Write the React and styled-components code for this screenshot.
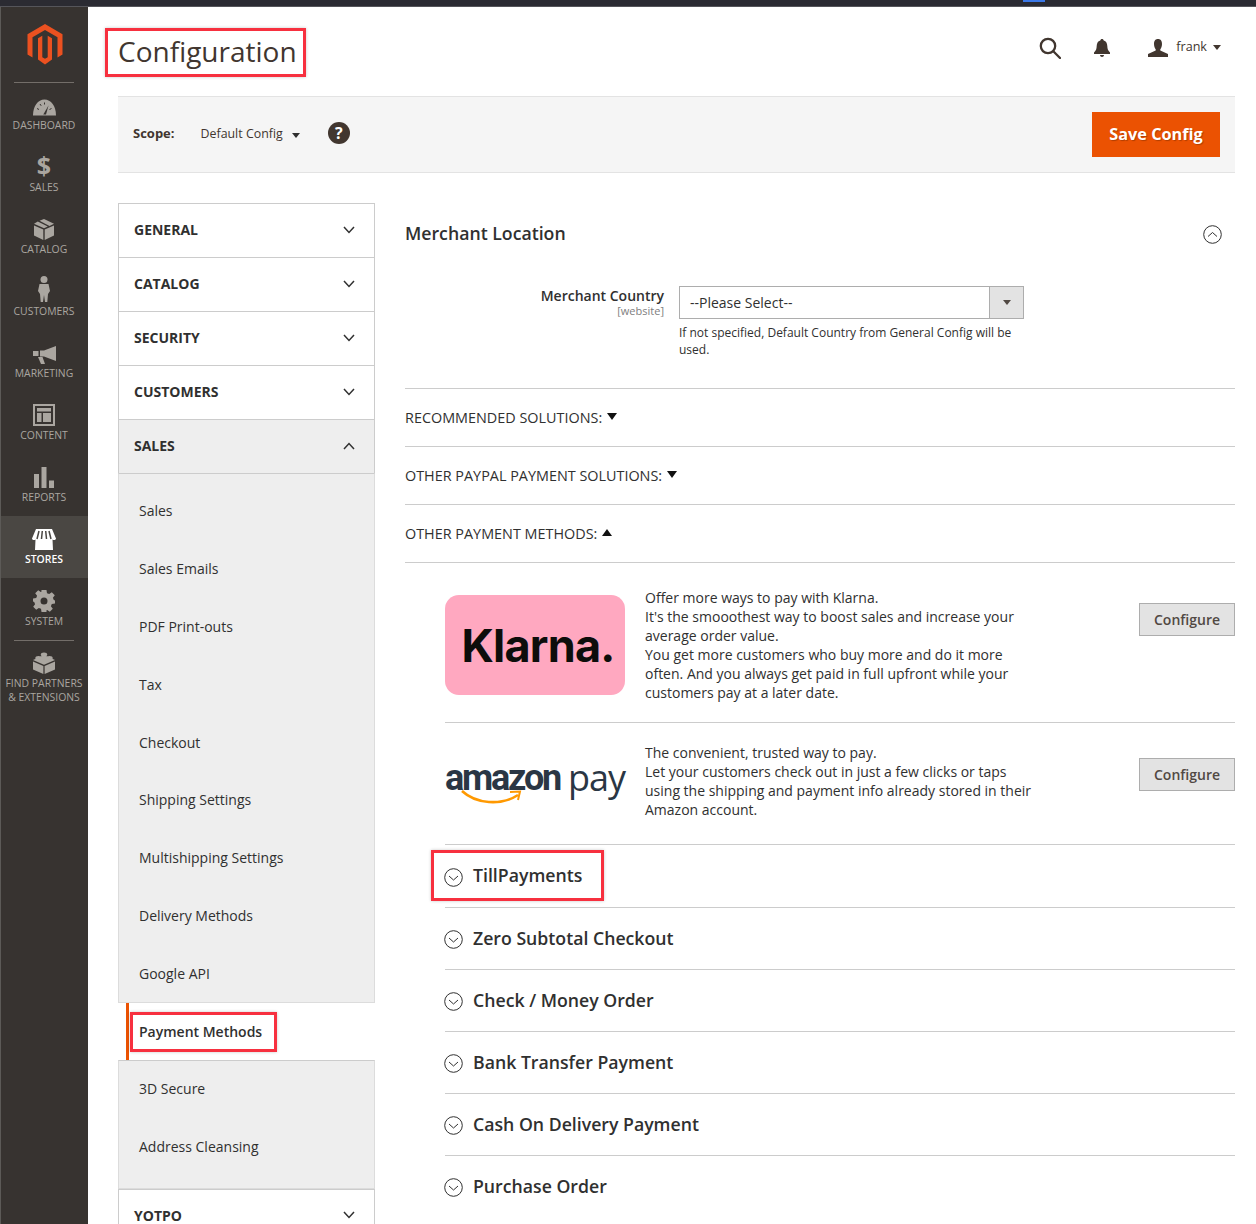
import React from "react";
import styled, { createGlobalStyle } from "styled-components";

const GlobalStyle = createGlobalStyle`
  html, body {
    margin: 0;
    padding: 0;
    background: #fff;
  }
  body {
    font-family: "Open Sans", "Liberation Sans", sans-serif;
    font-size: 14px;
    color: #303030;
  }
  * {
    box-sizing: border-box;
  }
`;

const Page = styled.div`
  position: relative;
  width: 1256px;
  height: 1224px;
  overflow: hidden;
`;

const TopStrip = styled.div`
  position: relative;
  height: 7px;
  background: #2b2b32;
  border-bottom: 1px solid #55555a;
`;

const BlueTab = styled.span`
  position: absolute;
  left: 1023px;
  top: 0;
  width: 22px;
  height: 2px;
  background: #3b78e7;
`;

const Body = styled.div`
  display: flex;
  height: 1217px;
`;

const Sidebar = styled.nav`
  flex: 0 0 88px;
  background: #373330;
  border-left: 1px solid #5c5a57;
`;

const LogoSlot = styled.div`
  height: 75px;
  display: flex;
  justify-content: center;
  padding-top: 17px;
`;

const MenuItem = styled.div`
  height: 62px;
  display: flex;
  flex-direction: column;
  align-items: center;
  padding: 8px 1px 0 0;
  position: relative;
  background: ${(p) => (p.$active ? "#4a4743" : "transparent")};
  color: ${(p) => (p.$active ? "#fff" : "#aaa6a0")};

  &::before {
    content: ${(p) => (p.$rule ? '""' : "none")};
    position: absolute;
    top: 0;
    left: 13px;
    width: 60px;
    height: 1px;
    background: #736e69;
  }
`;

const MenuIcon = styled.div`
  flex: 0 0 26px;
  display: flex;
  align-items: flex-end;
  justify-content: center;
`;

const DollarGlyph = styled.span`
  font-size: 25px;
  line-height: 25px;
  font-weight: 700;
  font-family: "Open Sans", sans-serif;
`;

const MenuLabel = styled.div`
  flex: none;
  margin-top: 2px;
  font-size: 10.4px;
  line-height: 14px;
  text-align: center;
  white-space: nowrap;
  text-transform: uppercase;
  font-weight: ${(p) => (p.$active ? 600 : 400)};
`;

const Main = styled.main`
  flex: 1;
  min-width: 0;
  padding: 0 21px 0 30px;
`;

const Header = styled.header`
  height: 89px;
  display: flex;
  align-items: center;
  justify-content: space-between;
  padding-bottom: 1px;
`;

const Marked = styled.span`
  position: relative;
  display: inline-block;

  &::after {
    content: "";
    position: absolute;
    inset: ${(p) => p.$inset};
    border: 3px solid #f7303f;
    box-shadow: 0 0 3px rgba(0, 0, 0, 0.22);
    pointer-events: none;
  }
`;

const PageTitle = styled.h1`
  margin: 0;
  font-size: 28px;
  line-height: 38px;
  font-weight: 400;
  color: #41362f;
`;

const HeaderTools = styled.div`
  display: flex;
  align-items: center;
  padding-right: 14px;
  margin-bottom: 7px;
  color: #41362f;
`;

const ToolIcon = styled.span`
  display: flex;
  margin-right: ${(p) => p.$gap}px;
`;

const UserName = styled.span`
  font-size: 12.6px;
  margin: 0 6px 3px 8px;
  color: #41362f;
`;

const Caret = styled.span`
  display: inline-block;
  width: 0;
  height: 0;
  margin-left: ${(p) => p.$gap || 0}px;
  border-left: ${(p) => p.$size || 4}px solid transparent;
  border-right: ${(p) => p.$size || 4}px solid transparent;
  ${(p) => (p.$up ? "border-bottom" : "border-top")}: ${(p) => (p.$size ? p.$size + 2 : 5)}px solid ${(p) => p.$color || "#41362f"};
`;

const ScopeBar = styled.div`
  height: 77px;
  display: flex;
  align-items: center;
  justify-content: space-between;
  padding: 0 15px;
  background: #f5f5f5;
  border-top: 1px solid #e3e3e3;
  border-bottom: 1px solid #e3e3e3;
`;

const ScopeLeft = styled.div`
  display: flex;
  align-items: center;
  padding-bottom: 4px;
`;

const ScopeLabel = styled.span`
  font-size: 13px;
  font-weight: 700;
  color: #41362f;
  margin-right: 26px;
`;

const ScopeValue = styled.span`
  font-size: 12.4px;
  padding-top: 2px;
  color: #41362f;
`;

const ScopeCaret = styled(Caret)`
  margin-top: 5px;
`;

const HelpBadge = styled.span`
  width: 22px;
  height: 22px;
  margin-left: 28px;
  border-radius: 50%;
  background: #41362f;
  color: #fff;
  font-size: 16px;
  font-weight: 700;
  line-height: 22px;
  text-align: center;
`;

const SaveButton = styled.button`
  width: 128px;
  height: 45px;
  padding-bottom: 2px;
  border: 0;
  background: #eb5202;
  color: #fff;
  font-family: inherit;
  font-size: 16.3px;
  font-weight: 700;
  text-shadow: 1px 1px 1px rgba(0, 0, 0, 0.25);
`;

const Columns = styled.div`
  display: flex;
  gap: 30px;
  margin-top: 30px;
`;

const ConfigNav = styled.aside`
  flex: 0 0 257px;
`;

const NavHead = styled.div`
  height: 54px;
  display: flex;
  align-items: center;
  justify-content: space-between;
  padding: 0 19px 2px 15px;
  border: 1px solid #cccccc;
  border-bottom: 0;
  background: ${(p) => (p.$open ? "#eeeeee" : "#fff")};
  font-size: 14px;
  font-weight: 700;
  color: #303030;
  text-transform: uppercase;
`;

const NavPanel = styled.div`
  background: #eeeeee;
  border: 1px solid #dcdcdc;
  border-top: 1px solid #cccccc;
  padding: ${(p) => p.$pad};
`;

const NavLink = styled.div`
  height: 57.8px;
  display: flex;
  align-items: center;
  padding: 0 0 ${(p) => p.$lift || 0}px 20px;
  font-size: 14px;
  color: #303030;
`;

const ActiveLink = styled.div`
  height: 57px;
  margin-left: 8px;
  display: flex;
  align-items: center;
  padding-left: 10px;
  border-left: 3px solid #eb5202;
  font-size: 14px;
  font-weight: 600;
  color: #303030;
`;

const Content = styled.section`
  flex: 1;
  min-width: 0;
`;

const SectionHead = styled.div`
  height: 60px;
  display: flex;
  align-items: center;
  justify-content: space-between;
  padding-right: 13px;
`;

const SectionTitle = styled.h2`
  margin: 0;
  font-size: 17.7px;
  font-weight: 600;
  color: #303030;
`;

const FormRow = styled.div`
  display: flex;
  gap: 15px;
  margin-top: 23px;
  padding-bottom: 30px;
`;

const FieldLabel = styled.div`
  flex: 0 0 259px;
  text-align: right;
  font-size: 14px;
  font-weight: 600;
  line-height: 19px;
`;

const ScopeHint = styled.div`
  font-size: 11px;
  font-weight: 400;
  line-height: 12px;
  color: #808080;
`;

const FieldControl = styled.div`
  flex: 0 0 345px;
`;

const SelectBox = styled.div`
  height: 33px;
  display: flex;
  align-items: stretch;
  border: 1px solid #adadad;
  font-size: 14px;
`;

const SelectValue = styled.div`
  flex: 1;
  display: flex;
  align-items: center;
  padding-left: 10px;
`;

const SelectArrow = styled.div`
  flex: 0 0 34px;
  display: flex;
  align-items: center;
  justify-content: center;
  background: #e3e3e3;
  border-left: 1px solid #adadad;
`;

const FieldNote = styled.p`
  margin: 5px 0 0;
  font-size: 12px;
  line-height: 17px;
`;

const GroupRow = styled.div`
  height: 58px;
  display: flex;
  align-items: center;
  gap: 5px;
  border-top: 1px solid #cccccc;
  font-size: 14.4px;
  text-transform: uppercase;
`;

const GroupCaret = styled(Caret)`
  margin-bottom: 2px;
`;

const Methods = styled.div`
  margin-left: 40px;
`;

const MethodsRule = styled.div`
  border-top: 1px solid #cccccc;
  margin-left: -40px;
`;

const Solution = styled.div`
  display: flex;
  align-items: flex-start;
  padding: ${(p) => p.$top}px 0 ${(p) => p.$bottom}px;
  border-top: ${(p) => (p.$first ? "0" : "1px solid #cccccc")};
`;

const SolutionLogo = styled.div`
  flex: 0 0 180px;
  align-self: center;
  margin-right: 20px;
`;

const KlarnaBadge = styled.div`
  height: 100px;
  border-radius: 14px;
  background: #ffa8c0;
  display: flex;
  align-items: center;
  justify-content: center;
  padding-left: 6px;
  color: #0d0d0b;
  font-family: Inter, sans-serif;
  font-size: 45px;
  font-weight: 700;
  letter-spacing: -0.8px;
`;

const AmazonMark = styled.div`
  position: relative;
  height: 42px;
  display: flex;
  align-items: flex-start;
  justify-content: space-between;
  color: #2a3644;
  margin-top: 2px;
`;

const AmazonWord = styled.span`
  font-family: Roboto, sans-serif;
  font-size: 36px;
  line-height: 34px;
  font-weight: 700;
  letter-spacing: -2.2px;
`;

const PayWord = styled.span`
  font-family: "Open Sans", sans-serif;
  font-size: 36px;
  line-height: 34px;
  font-weight: 400;
  letter-spacing: -1px;
`;

const SmileArrow = styled.svg`
  position: absolute;
  left: 16px;
  top: 29px;
`;

const SolutionText = styled.div`
  flex: 0 0 390px;
  font-size: 14px;
  line-height: 19px;
`;

const ConfigureButton = styled.button`
  margin: 15px 0 0 auto;
  width: 96px;
  height: 33px;
  background: #e3e3e3;
  border: 1px solid #adadad;
  color: #514943;
  font-family: inherit;
  font-size: 14px;
  font-weight: 600;
`;

const AccordionRow = styled.div`
  height: ${(p) => (p.$tall ? 63 : 62)}px;
  display: flex;
  align-items: center;
  gap: 10px;
  border-top: 1px solid #cccccc;
`;

const AccordionTitle = styled.h3`
  margin: 0;
  padding-bottom: 2px;
  font-size: 17.7px;
  font-weight: 600;
  color: #303030;
`;

const RingIcon = styled.svg`
  flex: none;
  margin: ${(p) => (p.$up ? "2px 0 0" : "2px 0 0 -1px")};
`;

const Chevron = ({ up }) => (
  <svg width="12" height="8" viewBox="0 0 12 8" fill="none" stroke="#303030" strokeWidth="1.5">
    <path d={up ? "M1 7l5-5.5L11 7" : "M1 1l5 5.5L11 1"} />
  </svg>
);

const CircleChevron = ({ up }) => (
  <RingIcon $up={up} width="19" height="19" viewBox="0 0 19 19" fill="none" stroke="#303030" strokeWidth="1">
    <circle cx="9.5" cy="9.5" r="8.8" />
    <path d={up ? "M5 11.5l4.5-4 4.5 4" : "M5 8l4.5 4 4.5-4"} />
  </RingIcon>
);

const MagentoLogo = () => (
  <svg width="36" height="41" viewBox="0 0 36 41" fill="#eb5120">
    <path d="M18 0L35.5 10.2V30.6L30.5 33.5V13.2L18 6L5.5 13.2V33.5L.5 30.6V10.2Z" />
    <path d="M15.3 11.7V33.2L18 34.8L20.7 33.2V11.7L25 14.2V35.6L18 40.5L11 35.6V14.2Z" />
  </svg>
);

const GaugeIcon = () => (
  <svg width="23" height="17" viewBox="0 0 23 17" fill="currentColor">
    <path d="M0 16.5C0 7 5 .5 11.5.5S23 7 23 16.5Z" />
    <path d="M10.3 15.5L15.5 6.5L13 15.5Z" fill="#373330" />
    <path d="M4 9.5l2 1M7 5l1.2 1.8M11.5 3.5v2M18.5 9.5l-2 1" stroke="#373330" strokeWidth="1" />
  </svg>
);

const BoxIcon = () => (
  <svg width="20" height="21" viewBox="0 0 20 21" fill="currentColor">
    <path d="M0 6.5L9.3 10.5V21L0 16.5Z" />
    <path d="M20 6.5L10.7 10.5V21L20 16.5Z" />
    <path d="M5.5 1.8L10 0L20 4.8L15.5 7Z" />
    <path d="M3.8 2.6L13.8 7.6L10 9.3L0 4.8Z" />
  </svg>
);

const PersonIcon = () => (
  <svg width="12" height="26" viewBox="0 0 12 26" fill="currentColor">
    <circle cx="6" cy="3.5" r="3.5" />
    <path d="M1.5 8H10.5L12 15L10 18L9.3 26H7L6 19L5 26H2.7L2 18L0 15Z" />
  </svg>
);

const MegaphoneIcon = () => (
  <svg width="23" height="18" viewBox="0 0 23 18" fill="currentColor">
    <path d="M23 0V15L11 10.5H7V4.5H11Z" />
    <path d="M0 5H5.5V10H0Z" />
    <path d="M5 11H9.5L12 18H8Z" />
  </svg>
);

const ContentIcon = () => (
  <svg width="22" height="22" viewBox="0 0 22 22" fill="currentColor">
    <path fillRule="evenodd" d="M0 0H22V22H0ZM2 2V20H20V2Z" />
    <path d="M4 4H18V7.5H4ZM4 9H8.5V18H4ZM10 9H18V18H10Z" />
  </svg>
);

const BarsIcon = () => (
  <svg width="20" height="21" viewBox="0 0 20 21" fill="currentColor">
    <path d="M0 7H5V21H0ZM7.5 0H12.5V21H7.5ZM15 13.5H20V21H15Z" />
  </svg>
);

const StoreIcon = () => (
  <svg width="24" height="21" viewBox="0 0 24 21" fill="currentColor">
    <path d="M4 0H20L24 9.5C24 11 22 11.5 20.5 10.5L21 21H3L3.5 10.5C2 11.5 0 11 0 9.5Z" />
    <path d="M7 2L5 10M10.3 2L9.5 10M13.7 2L14.5 10M17 2L19 10" stroke="#4a4743" strokeWidth="1.5" />
  </svg>
);

const GearIcon = () => (
  <svg width="22" height="22" viewBox="0 0 22 22" fill="currentColor">
    <path
      fillRule="evenodd"
      d="M8.5 0H13.5L14 3.2L16.2 4.1L18.8 2.2L21.8 5.2L19.9 7.8L20.8 10L22 10.5V13.5L18.8 14L17.9 16.2L19.8 18.8L16.8 21.8L14.2 19.9L13.5 20.2V22H8.5L8 18.8L5.8 17.9L3.2 19.8L.2 16.8L2.1 14.2L1.2 12L0 11.5V8.5L3.2 8L4.1 5.8L2.2 3.2L5.2 .2L7.8 2.1L8.3 1.9ZM11 7.5A3.5 3.5 0 1 0 11 14.5A3.5 3.5 0 1 0 11 7.5Z"
    />
  </svg>
);

const BrickIcon = () => (
  <svg width="22" height="22" viewBox="0 0 22 22" fill="currentColor">
    <path d="M0 9.5L10.4 14V22L0 17.5Z" />
    <path d="M22 9.5L11.6 14V22L22 17.5Z" />
    <path d="M11 3L22 8L11 12.8L0 8Z" />
    <ellipse cx="11" cy="2.5" rx="3.2" ry="2" />
    <ellipse cx="5.5" cy="6" rx="3.2" ry="2" />
    <ellipse cx="16.5" cy="6" rx="3.2" ry="2" />
    <ellipse cx="11" cy="9" rx="3.2" ry="2" />
  </svg>
);

const menu = [
  { label: "Dashboard", icon: <GaugeIcon />, rule: true },
  { label: "Sales", icon: <DollarGlyph>$</DollarGlyph> },
  { label: "Catalog", icon: <BoxIcon /> },
  { label: "Customers", icon: <PersonIcon /> },
  { label: "Marketing", icon: <MegaphoneIcon /> },
  { label: "Content", icon: <ContentIcon /> },
  { label: "Reports", icon: <BarsIcon /> },
  { label: "Stores", icon: <StoreIcon />, active: true },
  { label: "System", icon: <GearIcon /> },
  { label: "Find Partners", second: "& Extensions", icon: <BrickIcon />, rule: true },
];

const topSections = ["General", "Catalog", "Security", "Customers"];

const salesLinks = [
  "Sales",
  "Sales Emails",
  "PDF Print-outs",
  "Tax",
  "Checkout",
  "Shipping Settings",
  "Multishipping Settings",
  "Delivery Methods",
  "Google API",
];

const accordions = [
  "Zero Subtotal Checkout",
  "Check / Money Order",
  "Bank Transfer Payment",
  "Cash On Delivery Payment",
  "Purchase Order",
];

const App = () => {
  return (
    <Page>
      <GlobalStyle />
      <TopStrip>
        <BlueTab />
      </TopStrip>
      <Body>
        <Sidebar>
          <LogoSlot>
            <MagentoLogo />
          </LogoSlot>
          {menu.map((item) => (
            <MenuItem key={item.label} $active={item.active} $rule={item.rule}>
              <MenuIcon>{item.icon}</MenuIcon>
              <MenuLabel $active={item.active}>
                {item.label}
                {item.second && <br />}
                {item.second}
              </MenuLabel>
            </MenuItem>
          ))}
        </Sidebar>

        <Main>
          <Header>
            <Marked $inset="-4px -9px -7px -13px">
              <PageTitle>Configuration</PageTitle>
            </Marked>
            <HeaderTools>
              <ToolIcon $gap={33}>
                <svg width="22" height="22" viewBox="0 0 22 22" fill="none" stroke="currentColor" strokeWidth="2.3">
                  <circle cx="9" cy="9" r="7.2" />
                  <path d="M14.3 14.3L21 21" strokeLinecap="round" />
                </svg>
              </ToolIcon>
              <ToolIcon $gap={38}>
                <svg width="16" height="18" viewBox="0 0 16 18" fill="currentColor">
                  <path d="M8 0C9 0 9.6.6 9.7 1.5C12.3 2.3 13.2 4.4 13.3 7C13.4 10 14 11.6 16 13.5V15H0V13.5C2 11.6 2.6 10 2.7 7C2.8 4.4 3.7 2.3 6.3 1.5C6.4.6 7 0 8 0Z" />
                  <path d="M6 16H10C10 17.2 9 18 8 18S6 17.2 6 16Z" />
                </svg>
              </ToolIcon>
              <ToolIcon $gap={0}>
                <svg width="20" height="18" viewBox="0 0 20 18" fill="currentColor">
                  <path d="M10 0C13 0 14 2.2 14 5C14 7.5 13 9.5 12.3 10.2V11.5L20 15V18H0V15L7.7 11.5V10.2C7 9.5 6 7.5 6 5C6 2.2 7 0 10 0Z" />
                </svg>
              </ToolIcon>
              <UserName>frank</UserName>
              <Caret />
            </HeaderTools>
          </Header>

          <ScopeBar>
            <ScopeLeft>
              <ScopeLabel>Scope:</ScopeLabel>
              <ScopeValue>Default Config</ScopeValue>
              <ScopeCaret $gap={9} $color="#303030" />
              <HelpBadge>?</HelpBadge>
            </ScopeLeft>
            <SaveButton>Save Config</SaveButton>
          </ScopeBar>

          <Columns>
            <ConfigNav>
              {topSections.map((name) => (
                <NavHead key={name}>
                  {name}
                  <Chevron />
                </NavHead>
              ))}
              <NavHead $open>
                Sales
                <Chevron up />
              </NavHead>
              <NavPanel $pad="8px 0 0">
                {salesLinks.map((link) => (
                  <NavLink key={link}>{link}</NavLink>
                ))}
              </NavPanel>
              <ActiveLink>
                <Marked $inset="-10px -15px -11px -9px">Payment Methods</Marked>
              </ActiveLink>
              <NavPanel $pad="0 0 11px">
                <NavLink $lift={4}>3D Secure</NavLink>
                <NavLink $lift={2}>Address Cleansing</NavLink>
              </NavPanel>
              <NavHead>
                Yotpo
                <Chevron />
              </NavHead>
            </ConfigNav>

            <Content>
              <SectionHead>
                <SectionTitle>Merchant Location</SectionTitle>
                <CircleChevron up />
              </SectionHead>
              <FormRow>
                <FieldLabel>
                  Merchant Country
                  <ScopeHint>[website]</ScopeHint>
                </FieldLabel>
                <FieldControl>
                  <SelectBox>
                    <SelectValue>--Please Select--</SelectValue>
                    <SelectArrow>
                      <Caret $color="#514943" />
                    </SelectArrow>
                  </SelectBox>
                  <FieldNote>If not specified, Default Country from General Config will be used.</FieldNote>
                </FieldControl>
              </FormRow>

              <GroupRow>
                Recommended Solutions:
                <GroupCaret $size={5} $color="#111" />
              </GroupRow>
              <GroupRow>
                Other PayPal Payment Solutions:
                <GroupCaret $size={5} $color="#111" />
              </GroupRow>
              <GroupRow>
                Other Payment Methods:
                <GroupCaret $size={5} $up $color="#111" />
              </GroupRow>

              <Methods>
                <MethodsRule />
                <Solution $first $top={25} $bottom={20}>
                  <SolutionLogo>
                    <KlarnaBadge>Klarna.</KlarnaBadge>
                  </SolutionLogo>
                  <SolutionText>
                    Offer more ways to pay with Klarna.
                    <br />
                    It's the smooothest way to boost sales and increase your average order value.
                    <br />
                    You get more customers who buy more and do it more often. And you always get paid in full upfront while your customers pay at a later date.
                  </SolutionText>
                  <ConfigureButton>Configure</ConfigureButton>
                </Solution>
                <Solution $top={20} $bottom={25}>
                  <SolutionLogo>
                    <AmazonMark>
                      <AmazonWord>amazon</AmazonWord>
                      <PayWord>pay</PayWord>
                      <SmileArrow width="61" height="15" viewBox="0 0 61 15" fill="none" stroke="#ff9900">
                        <path d="M1 1C15 14 40 16 57 5" strokeWidth="2.6" />
                        <path d="M49 2L59 1.5L57 10" strokeWidth="2" />
                      </SmileArrow>
                    </AmazonMark>
                  </SolutionLogo>
                  <SolutionText>
                    The convenient, trusted way to pay.
                    <br />
                    Let your customers check out in just a few clicks or taps using the shipping and payment info already stored in their Amazon account.
                  </SolutionText>
                  <ConfigureButton>Configure</ConfigureButton>
                </Solution>
                <AccordionRow $tall>
                  <CircleChevron />
                  <Marked $inset="-13px -22px -12px -42px">
                    <AccordionTitle>TillPayments</AccordionTitle>
                  </Marked>
                </AccordionRow>
                {accordions.map((name) => (
                  <AccordionRow key={name}>
                    <CircleChevron />
                    <AccordionTitle>{name}</AccordionTitle>
                  </AccordionRow>
                ))}
              </Methods>
            </Content>
          </Columns>
        </Main>
      </Body>
    </Page>
  );
};

export default App;
